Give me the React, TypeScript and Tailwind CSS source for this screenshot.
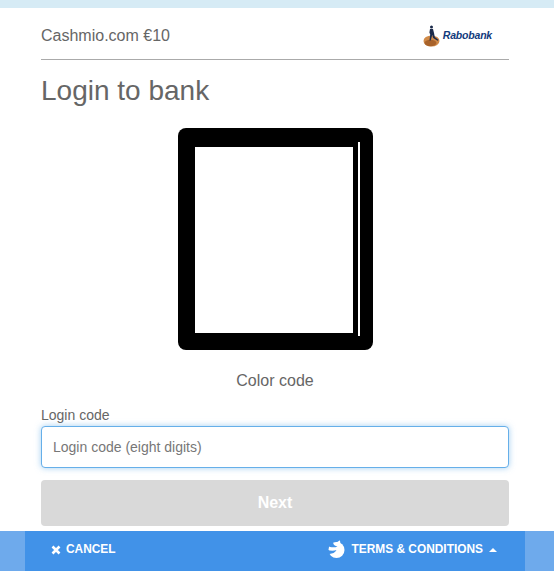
const FONT = "font-['Liberation_Sans',Arial,sans-serif]";

function RabobankLogo() {
  return (
    <div className="flex items-center mr-[17px] mt-[3px]">
      <svg width="19" height="23" viewBox="0 0 19 23" className="shrink-0">
        <ellipse cx="9.500" cy="17" rx="8" ry="5.500" fill="#d08a48" />
        <ellipse cx="8.500" cy="19" rx="6" ry="3.200" fill="#a8622a" />
        <circle cx="9.500" cy="3" r="1.500" fill="#1b2a4a" />
        <path d="M8 5h3l1 4 .8 4 3.700 3-1 .8-4.300-2.800-1-3-1.500 5.500H7.500l.7-6-.8-2z" fill="#1b2a4a" />
      </svg>
      <span className="text-[10.5px] leading-none font-bold italic text-[#123a7c] tracking-[-0.2px] ml-[2px] mt-[1px]">
        Rabobank
      </span>
    </div>
  );
}

function SwirlIcon() {
  return (
    <svg width="18" height="19" viewBox="0 0 18 19" className="shrink-0">
      <path d="M8 2.500c2 0 3.800-1 4.500-2.200 1 1.200 1 2.700.5 3.700z" fill="#ffffff" />
      <circle cx="9.500" cy="10" r="8" fill="#ffffff" />
      <path d="M0 0h7C5.500 3 6 5.500 10.500 6.500 7 8 3.500 7.500 0 5.500z" fill="#4192e8" />
      <path d="M0 9.500c3 1.500 6.500 1.700 9.500.5C8 12.800 5.500 13.600 2.500 14L0 13.500z" fill="#4192e8" />
    </svg>
  );
}

export default function App() {
  return (
    <div className={`${FONT} h-[571px] flex flex-col bg-white text-[#666666] overflow-hidden`}>
      <div className="h-[8px] bg-[#d6ebf5] shrink-0" />

      <main className="flex-1 mx-[41px] w-[468px]">
        <header className="h-[52px] flex items-center justify-between border-b border-[#aaaaaa]">
          <span className="text-[16px] leading-none mt-[4px]">Cashmio.com €10</span>
          <RabobankLogo />
        </header>

        <h1 className="text-[28px] leading-none mt-[17px] font-normal">Login to bank</h1>

        <div className="mt-[23px] ml-[137px] w-[195px] h-[222px] rounded-[8px] bg-black pl-[17px] flex items-start">
          <div className="w-[158px] h-[186px] mt-[19px] bg-white" />
          <div className="w-[2px] h-[194px] mt-[14px] ml-[5px] bg-white" />
        </div>

        <p className="text-[16px] leading-none text-center mt-[23px]">Color code</p>

        <label className="block text-[14px] leading-none mt-[19px]">Login code</label>
        <input
          readOnly
          placeholder="Login code (eight digits)"
          className="block w-full h-[42px] mt-[4px] pl-[11px] pr-[12px] text-[14px] rounded-[4px] border border-[#66afe9] shadow-[0_0_6px_rgba(102,175,233,0.6)] outline-none bg-white placeholder:text-[#777777]"
        />
        <button className="block w-full h-[46px] mt-[12px] rounded-[4px] bg-[#d9d9d9] text-white text-[16px] font-bold">
          Next
        </button>
      </main>

      <footer className="h-[40px] shrink-0 bg-[#6eaaec] pl-[25px] pr-[29px]">
        <div className="h-full bg-[#4192e8] flex items-center justify-between pl-[26px] pr-[28px] text-white text-[11.9px] font-bold">
          <div className="flex items-center gap-[5px] mt-[-3px]">
            <svg width="10" height="10" viewBox="0 0 10 10" className="mt-[2px]">
              <path d="M1.500 1.500l7 7M8.500 1.500l-7 7" stroke="#ffffff" strokeWidth="2.600" />
            </svg>
            <span>CANCEL</span>
          </div>
          <div className="flex items-center mt-[-3px]">
            <SwirlIcon />
            <span className="ml-[7px]">TERMS &amp; CONDITIONS</span>
            <span className="ml-[6px] mt-[1px] w-0 h-0 border-x-[4px] border-x-transparent border-b-[4px] border-b-white" />
          </div>
        </div>
      </footer>
    </div>
  );
}
